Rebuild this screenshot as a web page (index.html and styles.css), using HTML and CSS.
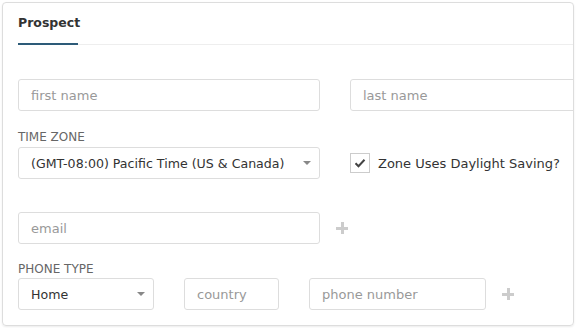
FILE: index.html
```html
<!DOCTYPE html>
<html>
<head>
    <title>Prospect</title>
    <link rel="stylesheet" href="styles.css">
</head>
<body>
    <div class="card">
        <div class="tabs">
            <div class="tab active">Prospect</div>
        </div>

        <div class="form">
            <div class="row names">
                <input class="field wide" type="text" placeholder="first name">
                <input class="field wide" type="text" placeholder="last name">
            </div>

            <div class="row zone">
                <div class="group">
                    <label class="caption">TIME ZONE</label>
                    <div class="select wide">
                        <span>(GMT-08:00) Pacific Time (US &amp; Canada)</span>
                        <span class="caret"></span>
                    </div>
                </div>
                <label class="check">
                    <span class="box">
                        <svg width="12" height="10" viewBox="0 0 12 10"><path d="M1.5 5.2 L4.5 8.2 L10.5 1.8" fill="none" stroke="#444" stroke-width="2"/></svg>
                    </span>
                    Zone Uses Daylight Saving?
                </label>
            </div>

            <div class="row email">
                <input class="field wide" type="text" placeholder="email">
                <span class="plus"></span>
            </div>

            <div class="group phone-group">
                <label class="caption">PHONE TYPE</label>
                <div class="row phone">
                    <div class="select home">
                        <span>Home</span>
                        <span class="caret"></span>
                    </div>
                    <input class="field country" type="text" placeholder="country">
                    <input class="field number" type="text" placeholder="phone number">
                    <span class="plus"></span>
                </div>
            </div>
        </div>
    </div>
</body>
</html>
```

FILE: styles.css
```css
body {
    margin: 0;
    padding: 2px;
    font-family: "DejaVu Sans", sans-serif;
    font-size: 13px;
    color: #333;
    background: #fff;
}
.card {
    height: 322px;
    border: 1px solid #ddd;
    border-radius: 4px;
    overflow: hidden;
    box-shadow: 0 1px 2px rgba(0,0,0,0.08);
}
.tabs {
    display: flex;
    margin-left: 15px;
    border-bottom: 1px solid #eee;
    height: 41px;
}
.tab {
    font-weight: bold;
    font-size: 12.5px;
    padding-top: 12px;
    width: 60px;
    box-sizing: border-box;
    white-space: nowrap;
}
.tab.active {
    border-bottom: 2px solid #2d5b78;
    margin-bottom: -1px;
}
.form {
    padding: 34px 0 0 15px;
}
.row {
    display: flex;
    align-items: center;
    gap: 30px;
}
.field, .select {
    height: 32px;
    box-sizing: border-box;
    border: 1px solid #ddd;
    border-radius: 3px;
    padding: 0 12px;
    font-family: inherit;
    font-size: 13px;
    color: #333;
    background: #fff;
    flex: none;
}
.field::placeholder {
    color: #999;
}
.wide { width: 302px; }
.select {
    display: flex;
    align-items: center;
    justify-content: space-between;
    padding-right: 8px;
    font-size: 12.6px;
}
.caret {
    width: 0;
    height: 0;
    border-left: 4px solid transparent;
    border-right: 4px solid transparent;
    border-top: 4px solid #888;
}
.caption {
    display: block;
    font-size: 12px;
    color: #666;
    margin-bottom: 3px;
}
.zone {
    margin-top: 19px;
    align-items: flex-end;
}
.check {
    display: flex;
    align-items: center;
    gap: 8px;
    height: 32px;
}
.box {
    width: 20px;
    height: 20px;
    box-sizing: border-box;
    border: 1px solid #ccc;
    display: flex;
    align-items: center;
    justify-content: center;
}
.email {
    margin-top: 33px;
    gap: 16px;
}
.plus {
    width: 12px;
    height: 12px;
    background:
        linear-gradient(#ccc, #ccc) center / 12px 3px no-repeat,
        linear-gradient(#ccc, #ccc) center / 3px 12px no-repeat;
}
.phone-group {
    margin-top: 18px;
}
.phone-group .caption {
    margin-bottom: 2px;
}
.phone .plus {
    margin-left: -14px;
}
.home { width: 136px; }
.country { width: 95px; }
.number { width: 177px; }
```
